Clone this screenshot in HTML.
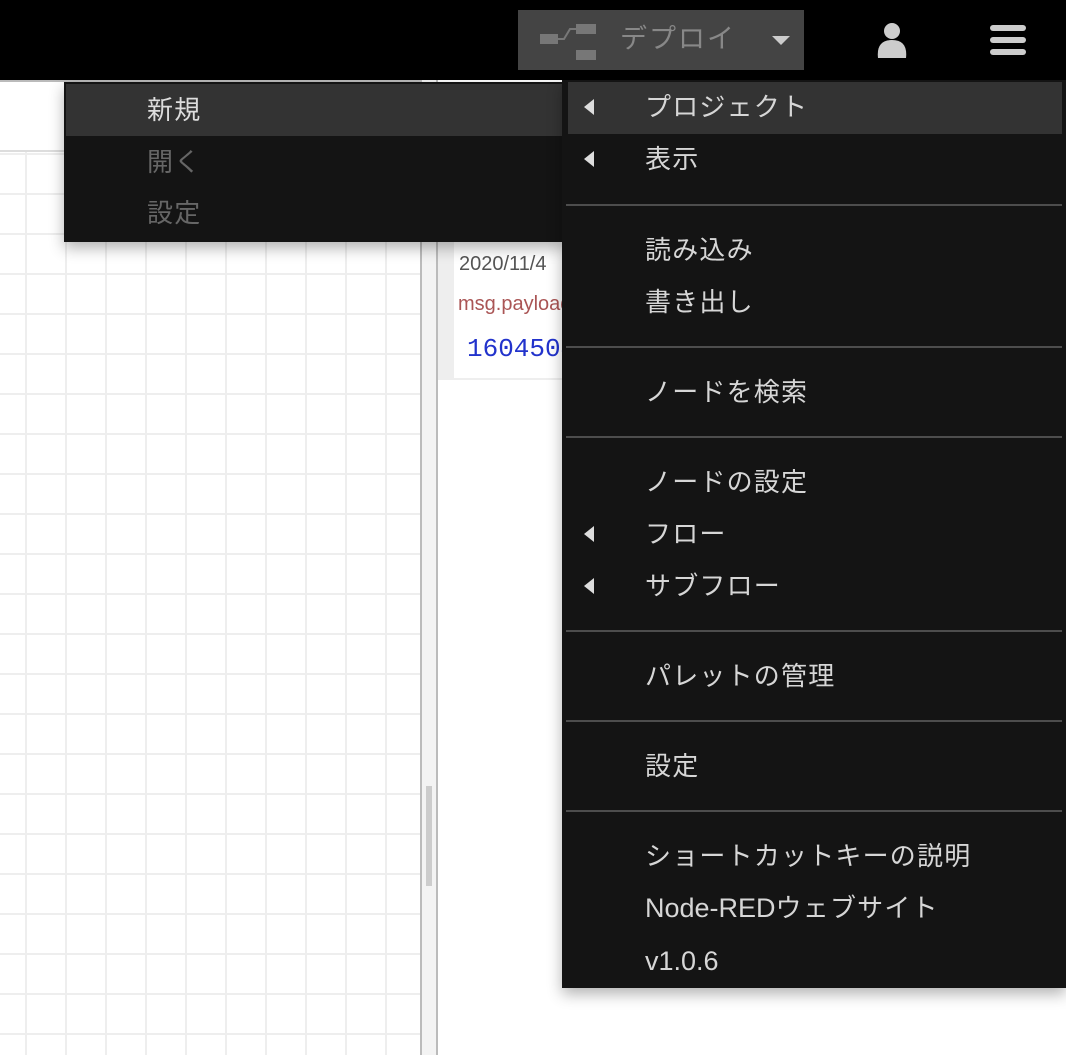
<!DOCTYPE html>
<html><head><meta charset="utf-8"><style>
*{margin:0;padding:0;box-sizing:border-box}
body{width:1066px;height:1055px;position:relative;overflow:hidden;background:#fff;font-family:"Liberation Sans","Noto Sans CJK JP",sans-serif;}
.a{position:absolute}
.grid{left:0;top:150px;width:420px;height:905px;background-color:#fff;
background-image:linear-gradient(to right,#eee 0,#eee 2px,transparent 2px),linear-gradient(to bottom,#eee 0,#eee 2px,transparent 2px);
background-size:40px 40px;background-position:25px 1px,0 1px;border-top:2px solid #ddd}
.t{position:absolute;font-size:26px;color:#d6d6d6;line-height:30px;white-space:nowrap;letter-spacing:1.2px}
.sep{position:absolute;left:566px;width:496px;height:2px;background:#4d4d4d}
.arr{position:absolute;width:0;height:0;border-top:8px solid transparent;border-bottom:8px solid transparent;border-right:10px solid #ddd}
.l{letter-spacing:0;font-size:27px}
</style></head><body>
<div class="a" style="left:0;top:0;width:1066px;height:80px;background:#000"></div>
<div class="a" style="left:0;top:80px;width:420px;height:70px;background:#fff;border-top:2px solid #bbb"></div>
<div class="a grid"></div>
<div class="a" style="left:420px;top:80px;width:2px;height:975px;background:#bbb"></div>
<div class="a" style="left:422px;top:80px;width:14px;height:975px;background:#f3f3f3"></div>
<div class="a" style="left:426px;top:786px;width:6px;height:100px;background:#ccc"></div>
<div class="a" style="left:436px;top:80px;width:2px;height:975px;background:#bbb"></div>
<div class="a" style="left:438px;top:80px;width:628px;height:975px;background:#fff"></div>
<div class="a" style="left:438px;top:240px;width:16px;height:140px;background:#eee"></div>
<div class="a" style="left:438px;top:378px;width:130px;height:2px;background:#eee"></div>
<div class="t" style="left:459px;top:249px;font-size:20px;color:#555;letter-spacing:0">2020/11/4</div>
<div class="t" style="left:458px;top:289px;font-size:20px;color:#a55;letter-spacing:0">msg.payload</div>
<div class="t" style="left:467px;top:334px;font-size:26px;color:#2233cc;font-family:'Liberation Mono',monospace;letter-spacing:0">1604504</div>
<!-- header -->
<div class="a" style="left:518px;top:10px;width:286px;height:60px;background:#444"></div>
<svg class="a" style="left:540px;top:24px" width="58" height="36"><rect x="0" y="10" width="18" height="10" fill="#777"/><path d="M18 15 L24 15 L30 5 L36 5" stroke="#777" stroke-width="2" fill="none"/><rect x="36" y="0" width="20" height="10" fill="#777"/><rect x="36" y="26" width="20" height="10" fill="#777"/></svg>
<div class="t" style="left:620px;top:24px;color:#888;font-size:27px;letter-spacing:2px">デプロイ</div>
<div class="a" style="left:772px;top:36px;border-left:9px solid transparent;border-right:9px solid transparent;border-top:9px solid #ccc;width:0;height:0"></div>
<svg class="a" style="left:876px;top:22px" width="32" height="36"><circle cx="16" cy="9" r="8" fill="#ccc"/><path d="M2 36 Q0 18 16 18 Q32 18 30 36 Z" fill="#ccc"/></svg>
<div class="a" style="left:990px;top:25px;width:36px;height:6px;border-radius:3px;background:#ccc"></div>
<div class="a" style="left:990px;top:37px;width:36px;height:6px;border-radius:3px;background:#ccc"></div>
<div class="a" style="left:990px;top:49px;width:36px;height:6px;border-radius:3px;background:#ccc"></div>
<!-- left submenu -->
<div class="a" style="left:64px;top:82px;width:502px;height:160px;background:#141414;box-shadow:0 6px 14px rgba(0,0,0,.3)"></div>
<div class="a" style="left:66px;top:84px;width:500px;height:52px;background:#333"></div>
<div class="t" style="left:147px;top:95px;color:#ddd">新規</div>
<div class="t" style="left:147px;top:147px;color:#666">開く</div>
<div class="t" style="left:147px;top:198px;color:#666">設定</div>
<!-- right menu -->
<div class="a" style="left:562px;top:80px;width:504px;height:908px;background:#141414;box-shadow:0 6px 14px rgba(0,0,0,.3)"></div>
<div class="a" style="left:568px;top:82px;width:494px;height:52px;background:#333"></div>
<div class="arr" style="left:584px;top:99px"></div>
<div class="t" style="left:645px;top:92px">プロジェクト</div>
<div class="arr" style="left:584px;top:151px"></div>
<div class="t" style="left:645px;top:144px">表示</div>
<div class="sep" style="top:204px"></div>
<div class="t" style="left:645px;top:235px">読み込み</div>
<div class="t" style="left:645px;top:287px">書き出し</div>
<div class="sep" style="top:346px"></div>
<div class="t" style="left:645px;top:377px">ノードを検索</div>
<div class="sep" style="top:436px"></div>
<div class="t" style="left:645px;top:467px">ノードの設定</div>
<div class="arr" style="left:584px;top:526px"></div>
<div class="t" style="left:645px;top:519px">フロー</div>
<div class="arr" style="left:584px;top:578px"></div>
<div class="t" style="left:645px;top:571px">サブフロー</div>
<div class="sep" style="top:630px"></div>
<div class="t" style="left:645px;top:661px">パレットの管理</div>
<div class="sep" style="top:720px"></div>
<div class="t" style="left:645px;top:751px">設定</div>
<div class="sep" style="top:810px"></div>
<div class="t" style="left:645px;top:841px">ショートカットキーの説明</div>
<div class="t" style="left:645px;top:893px"><span class="l">Node-RED</span>ウェブサイト</div>
<div class="t l" style="left:645px;top:946px">v1.0.6</div>
</body></html>
